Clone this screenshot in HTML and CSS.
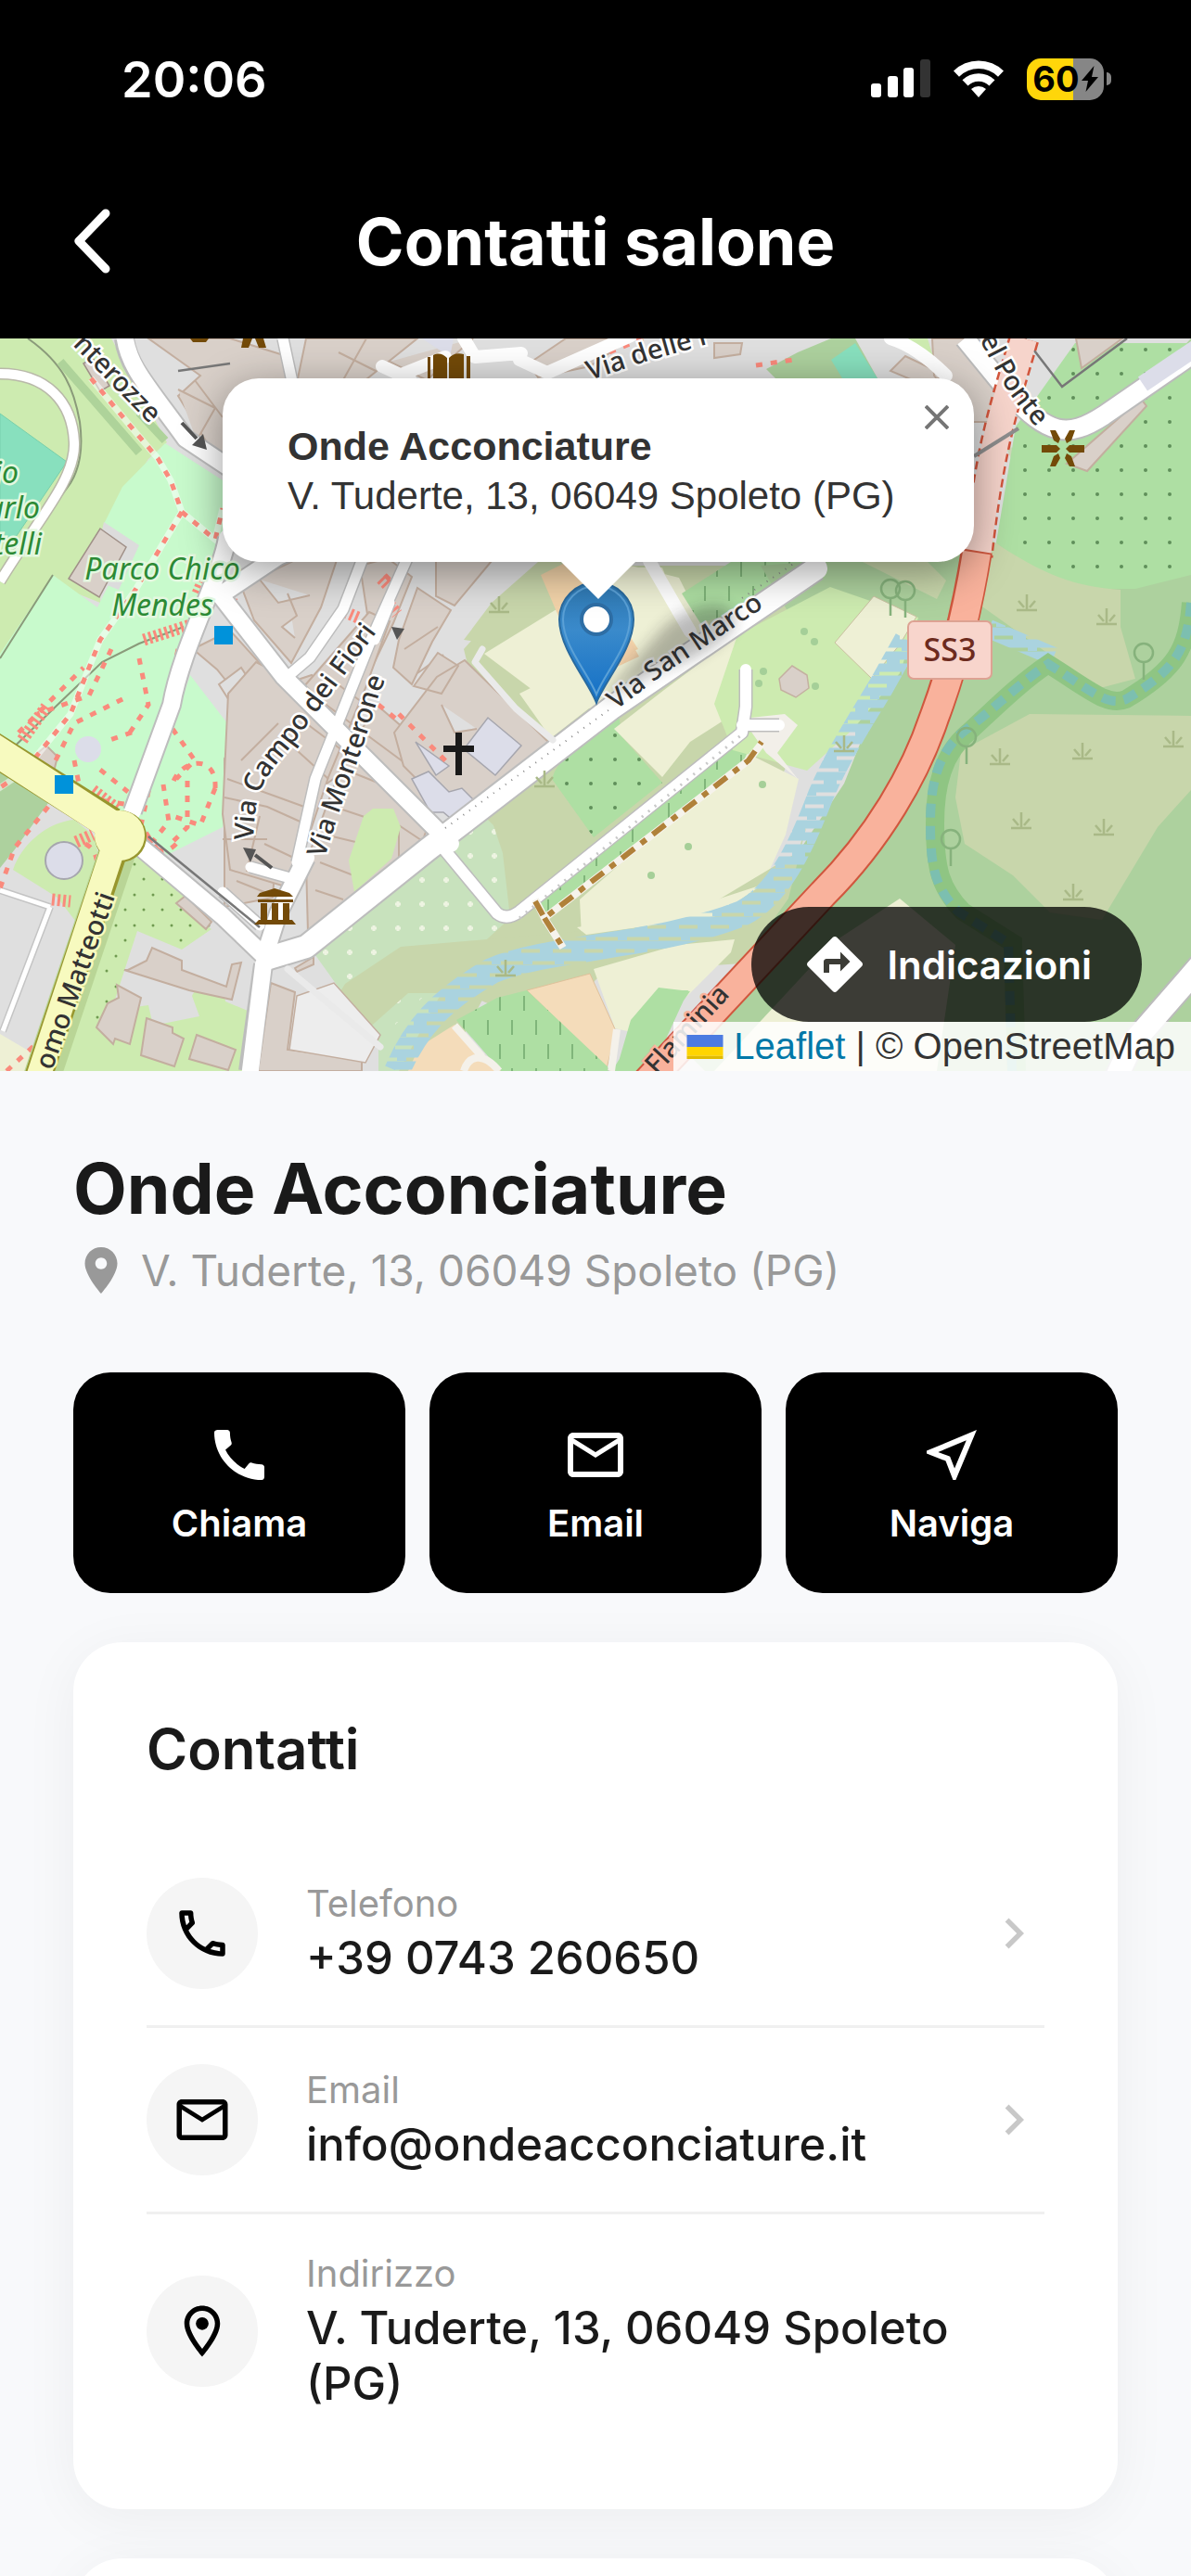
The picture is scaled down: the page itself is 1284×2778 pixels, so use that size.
FILE: index.html
```html
<!DOCTYPE html>
<html lang="it">
<head>
<meta charset="utf-8">
<meta name="viewport" content="width=device-width, initial-scale=1">
<title>Contatti salone</title>
<link rel="stylesheet" href="styles.css">
</head>
<body>
<header class="topbar">
  <div class="status">
    <span class="status-time">20:06</span>
    <div class="status-icons">
      <svg class="signal" viewBox="0 0 64 42" aria-hidden="true">
        <rect x="0" y="26" width="11" height="15" rx="3"/><rect x="18" y="18" width="11" height="23" rx="3"/><rect x="35" y="9" width="11" height="32" rx="3"/><rect x="53" y="0" width="11" height="41" rx="3" fill="#333"/>
      </svg>
      <svg class="wifi" viewBox="0 0 56 42" aria-hidden="true">
        <path d="M1 12.500a38.500 38.500 0 0 1 54 0l-6 6.200a30 30 0 0 0-42 0z"/>
        <path d="M10.500 22.300a25 25 0 0 1 35 0l-6 6.200a16.500 16.500 0 0 0-23 0z"/>
        <path d="M20 32a12 12 0 0 1 16 0l-8 9z"/>
      </svg>
      <div class="battery">
        <span class="battery-level">60</span>
        <svg class="bolt" viewBox="0 0 18 28" aria-hidden="true"><path d="M13.500 0L0 16h7L4.500 28 18 12h-7z"/></svg>
      </div>
      <i class="battery-nub"></i>
    </div>
  </div>
  <nav class="nav">
    <button class="back" type="button" aria-label="Indietro">
      <svg viewBox="0 0 40 70" aria-hidden="true"><path d="M35 5L6 35l29 30" fill="none" stroke="#fff" stroke-width="9" stroke-linecap="round" stroke-linejoin="round"/></svg>
    </button>
    <h1 class="nav-title">Contatti salone</h1>
  </nav>
</header>

<main>
  <section class="map" aria-label="Mappa">
    <svg class="map-canvas" viewBox="0 365 1284 790" preserveAspectRatio="xMidYMid slice" aria-hidden="true">
      <defs>
        <pattern id="trees" width="26" height="26" patternUnits="userSpaceOnUse"><circle cx="13" cy="13" r="2" fill="#5f8f5a"/></pattern>
        <pattern id="garden" width="20" height="33" patternUnits="userSpaceOnUse"><circle cx="5" cy="8" r="1.500" fill="#6f9a50"/><circle cx="15" cy="24" r="1.500" fill="#6f9a50"/></pattern>
        <pattern id="plants" width="52" height="52" patternUnits="userSpaceOnUse"><path d="M13 10v6M10 13h6M39 36v6M36 39h6M39 10v6M36 13h6M13 36v6M10 39h6" stroke="#eef4e2" stroke-width="3"/></pattern>
        <pattern id="rows" width="26" height="52" patternUnits="userSpaceOnUse"><path d="M6 8v16M19 34v16" stroke="#80b57a" stroke-width="2"/></pattern>
        <pattern id="water" width="34" height="26" patternUnits="userSpaceOnUse"><path d="M0 5h34M0 18h34" stroke="#aad3df" stroke-width="9"/><path d="M4 12h14M20 25h10" stroke="#aad3df" stroke-width="6"/></pattern>
        <linearGradient id="pin" x1="0" y1="0" x2="0" y2="1"><stop offset="0" stop-color="#2e77b0"/><stop offset=".4" stop-color="#3a8acb"/><stop offset="1" stop-color="#126fc6"/></linearGradient>
        <filter id="soft" x="-30%" y="-30%" width="160%" height="160%"><feGaussianBlur stdDeviation="8"/></filter>
        <g id="reed" fill="none" stroke="#a9b987" stroke-width="2.500"><path d="M-11 8h22M0 8v-17M-3 5l-6-7M3 5l6-7"/></g>
        <g id="tree" fill="none" stroke="#86b27c" stroke-width="2.500"><circle cy="-9" r="10"/><path d="M0 1v19"/></g>
      </defs>
      <rect x="0" y="365" width="1284" height="790" fill="#dfdfdf"/>

      <!-- grass and parks, west -->
      <path fill="#cdebb0" d="M0 365h120l60 112-20 18-48 75-4 80-50-20L0 740z"/>
      <path fill="#c8facc" d="M178 478l62 40v90l-40 70-36 200-20 30L0 795v-90l57-85 48 35 20-40-13-50 20-40z"/>
      <path fill="#c8facc" d="M205 728l57 74-22 90-60 30-30-34z"/>
      <path fill="#88e0be" stroke="#77cfab" stroke-width="1" d="M0 446l72 52-57 84-15-5z"/>
      <path fill="none" stroke="#8a9a7a" stroke-width="2" d="M30 365c40 28 50 56 56 90 4 30 0 50-10 66L0 626M57 620L0 710M0 820l60-58 50-48 40-20 48-18"/>
      <path fill="none" stroke="#b9b9a9" stroke-width="13" d="M0 403c50 0 78 30 80 74 2 40-40 84-80 150"/>
      <path fill="none" stroke="#fff" stroke-width="10" d="M0 403c50 0 78 30 80 74 2 40-40 84-80 150"/>
      <path stroke="#aed39a" stroke-width="9" d="M65 390l85 98M150 445l28 30"/>
      <path fill="#dcdcdc" d="M112 563l38 25-22 48-30-12z"/>
      <path fill="#d9d0c9" stroke="#a09088" stroke-width="1.500" d="M108 570l28 20-29 54-33-20zM90 392l10-6 18 30-10 6z"/>

      <!-- west parking and lawn south of the avenue -->
      <path fill="#add19e" d="M0 832l52 34-36 50-16 20z"/>
      <path fill="#cdebb0" d="M14 938c10-30 40-52 66-54l22 18 6 30-20 70-26-34z"/>
      <path fill="none" stroke="#c4c4c4" stroke-width="8" d="M0 960l54 18M54 978L3 1112"/>
      <path fill="none" stroke="#fff" stroke-width="5" d="M0 960l54 18M54 978L3 1112"/>
      <path fill="#eef0d5" d="M0 1115l34 20-4 20H0z"/>
      <path fill="#cdebb0" d="M138 920l16 4 46 38-8 16 36 24-32 22-48-20-28 86 40-6 5 22 50-10-8-22c6-16 36-10 36 6l24 10v65H50z"/>
      <path fill="url(#garden)" d="M138 925l12-4 80 78-32 20-50-20-28 90-20 20z"/>
      <path fill="#c8e2bd" d="M340 1030l100-85 65-50 38-28 58 64-25 42 30 12-10 38-56 14-50 30-50 88h-32v-30z"/>
      <path fill="url(#plants)" d="M340 1030l100-85 65-50 38-28 58 64-25 42 10 22-76 36-50 40-40 40z"/>

      <!-- farmland, meadows and orchards -->
      <path fill="#c8d6ab" d="M500 700l80-90h260l60 0 60 60-110 150-40 100-120 60-60 30-90 30-60 115h-50l60-110 60-55-8-70-10-30-60-60 50-40z"/>
      <path fill="#aedfa3" d="M598 832l30-50 38-24 4 36 44 50-74 59-45-63z"/>
      <path fill="url(#trees)" d="M598 832l30-50 38-24 4 36 44 50-74 59-45-63z"/>
      <path fill="#eef0d5" d="M512 690l12-20 80-52 68-10 60 15 30 60-120 86-42-34-20-20-60-50z"/>
      <path fill="#c8d6ab" d="M500 690l30-40 50-44h100l-40 60-100 30z"/>
      <path fill="#eef0d5" d="M522 705l78-48 80-45h34l28 70-110 76-50-8z"/>
      <path fill="#eef0d5" d="M560 748l40-20 40 32-46 36zM662 786l54-42 80-60 12 20-14 64-50 32-30 38z"/>
      <path fill="#f2d3a9" d="M583 620l40-20 65 100-60 25z"/>
      <path fill="#f0cfa8" d="M655 700l24-10 10 18-30 14z"/>
      <path fill="#eef0d5" d="M625 970l180-158 56 28-14 60-28 62-60 20-132 28z"/>
      <path fill="#aedfa3" d="M580 974l222-178 8 6-8 18-218 168z"/>
      <path fill="url(#rows)" d="M580 974l222-178 8 6-8 18-218 168z"/>
      <path fill="#aedfa3" d="M735 640l70-45h90l-70 55-70 22z"/>
      <path fill="url(#rows)" d="M735 640l70-45h90l-70 55-70 22z"/>
      <path fill="#add19e" d="M820 610l250-20 214-225v790H760l-20-20 60-90 50-110 60-90 20-50z"/>
      <path fill="#cdebb0" d="M795 685l100-52 95 33-20 60-50 60-50 45-80-22-20-50z"/>
      <path fill="#f2efe9" d="M800 775l46-5 14 12-22 30 22 28-34-28z"/>
      <path fill="#eef0d5" stroke="#c9c0a0" stroke-width="1" d="M900 693l42-50 46 22-18 30-30 37z"/>
      <path fill="#d9d0c9" stroke="#c4b0a0" stroke-width="1.500" d="M840 732l14-14 16 10 2 14-14 10-16-8z"/>
      <path fill="#c8d6ab" d="M930 606h70l20 20-10 20z"/>
      <path fill="#c8d6ab" d="M1075 460l38 55-30 30-18 80 62-45z" opacity=".7"/>
      <path fill="#aedfa3" d="M1095 460l64-90h125v250l-60 15h-90l-60-50z"/>
      <path fill="url(#trees)" d="M1095 480l64-110h125v250l-60 15h-90l-40-50z"/>
      <path fill="#c8d6ab" d="M1068 582c60 40 90 50 140 54v40l16 56-38 10-60-40-70-50z"/>
      <path fill="#c8d6ab" d="M1110 770l174 2v80l-36 40-60 100-56-8-40-40-52-34-10-50 6-50z"/>
      <path fill="#c8d6ab" d="M640 1003l120-24 100-60 10-30-20 80-50 70-150 10-60 60-90-38-60 0-90 80h-34l56-90 60-40z"/>
      <path fill="#eef0d5" d="M622 1000l120-20 80-26-50 34-140 20zM640 1045l90-26 62-6-4 14-90 90-35-8z"/>
      <path fill="#eef0d5" d="M770 1155l130-140 70-46 60 50-20 136z"/>
      <path fill="#f4dcba" stroke="#dfc19a" stroke-width="1" d="M568 1068l68-18 28 62-10 40z"/>
      <path fill="#f4dcba" d="M440 1155l12-26 38-24 50 50z"/>
      <path fill="#aedfa3" d="M492 1100l44-24 32-8 92 87H540z"/>
      <path fill="url(#rows)" d="M492 1100l44-24 32-8 92 87H540z"/>
      <path fill="#aedfa3" d="M712 1068h30l-40 87h-42zM680 1100l30-35 34 4-60 86h-20z"/>
      <path fill="none" stroke="#f4f1ea" stroke-width="8" d="M665 1110l-6 45M490 1106l30 34M500 1155c5-16 20-22 38 0"/>

      <!-- river and streams -->
      <path fill="none" stroke="url(#water)" stroke-width="28" d="M428 1155c20-46 46-76 102-108 60-26 180-26 270-62 40-20 64-74 80-115 16-44 46-90 70-130l28-50"/>
      <path fill="none" stroke="url(#water)" stroke-width="20" d="M1066 678l70 30"/>
      <path fill="none" stroke="#8fc583" stroke-width="20" d="M1284 650c-4 50-16 72-70 104-20 8-36-8-84-38-30 20-60 50-84 72-30 24-38 60-38 100 0 50 6 70 30 95l54 34 4 138"/>
      <path fill="none" stroke="#7cbfb0" stroke-width="10" stroke-dasharray="15 9" d="M1284 650c-4 50-16 72-70 104-20 8-36-8-84-38-30 20-60 50-90 72-30 24-37 60-37 100 0 50 6 70 30 95l54 34 4 138"/>

      <!-- town blocks -->
      <g fill="#d9d0c9" stroke="#c3ae9f" stroke-width="2">
        <path d="M160 365h88l64 20-4 26-62 80-6 14-48-78 24-22zM330 365h120l-60 48h-70zM365 380l40 20M395 365l-28 50M420 390l40 20 50-45"/>
        <path d="M570 392l40-27h70l-44 30-56 12zM770 370h30l-2 12-28 4zM1005 365h48l28 60-14 30-20 0-40-50zM960 400l16-16 42 20-20 12zM1160 365h50l-44 32z"/>
        <path d="M192 420l40 20-20 35M210 410l30 40"/>
        <path d="M260 632l66-32 0-5h40l-20 60-32 60-40-46zM280 625l20 25 34-8M310 640l10 24-16 12 14 12"/>
        <path d="M388 610l30-8 26 20-20 50-24 50-18-30 14-30zM470 605h60l-40 48-20-10zM430 690l20-56 36 24-20 34-22 46-20-18zM436 700l36-24M450 726l28-20"/>
        <path d="M208 700l40-20 80 88-30 34-64-80zM300 740l36-12 70 80-58 40-50 60-4 60-52 10 0-160z"/>
        <path fill="#dfdfdf" d="M236 738l24-18 34 52-20 26z"/>
        <path d="M328 740l70-80 22 10-26 72-40 96-40 120-66-20-8-60 6-130 30-34z"/>
        <path d="M242 860l46 10 40 18M245 840l50 18 44 16M240 905h48M280 880l-14 60M330 780l40 30M310 800l44 40M345 755l40 30M360 735l30 22M260 820l40-40M285 910l42 20M255 950l50 20"/>
        <path d="M330 930l40-110 36-60 30 26 40 60-20 60-50 50-34 40-40 10z"/>
        <path d="M372 830l60 24M360 870l60 20M350 900l50 12M345 930l36 14M392 790l46 34M340 960l30 10"/>
        <path d="M425 790l46-60 30-18 90 88-20 20-80 62-56-56zM446 740l26-36 22 14-18 30zM476 760l14 30 24-4"/>
        <path d="M430 890l30 20 10 8-26 20-14-14z"/>
        <path d="M190 974l10-8 28 28-6 8zM138 1046l20-10 6-14 32 14v10l48 18 6-24 10-2-10 40-46-10-70-22zM104 1108l12-26 12-6-2-14 26 14-12 50-16-6-2 6zM158 1098l28 10v6l12 6-10 30-36-12zM212 1116l42 16-8 22-42-12z"/>
        <path d="M292 1060l26 10-8 62 80 10 0 13H278zM318 1044l20-12 0 8-18 8z"/>
        <path d="M1150 500l80-70 6 8-64 70z"/>
        <path d="M36 816l14-12 12 12-4 16z"/>
      </g>
      <path fill="#cdebb0" d="M392 880l10-8 22 0 8 20-10 34-40 36-6-34z"/>
      <path fill="#ededed" stroke="#c3ae9f" stroke-width="1.500" d="M320 1074l40-14 50 56-16 30-82-14z"/>
      <path fill="#dcdde9" stroke="#a6a6ae" stroke-width="1.500" d="M500 808l26-34 36 30-28 32zM444 840l18-8 22 22 14-4 12 12-20 24-12-10-14 0zM448 800l36 26-14 10z"/>
      <path fill="#dcdde9" d="M455 365h34l-4 20z"/>
      <path fill="#add19e" d="M860 380l36-15h26l24 43h-110l-10-10z"/>
      <path fill="#88e0be" d="M896 388l26-18 24 38h-38z"/>
      <path fill="#cdebb0" d="M960 365h40l8 26z"/>
      <g fill="#dcdde9" stroke="#a6a6ae" stroke-width="2"><circle cx="69" cy="928" r="20"/><circle cx="95" cy="808" r="14" stroke="none"/></g>

      <!-- paths: stairs and footways -->
      <g fill="none" stroke="#fff" stroke-opacity=".5" stroke-width="7">
        <path d="M98 408l48 58 24 28 14 24 12 34-50 84-38 54-32 80-50 62-30 20M196 552l36 30 8-34"/>
      </g>
      <g fill="none" stroke="#fa8a7c" stroke-width="5" stroke-dasharray="7 9">
        <path d="M98 408l48 58 24 28 14 24 12 34-50 84-38 54-32 80-50 62-30 20M196 552l36 30 8-34"/>
        <path d="M184 760l-16 60-26 60M120 700l-24 50-56 20M150 710l10 50-20 30M142 790l-30 10M192 700l-20 90M20 790l70-70M60 820l20-40 60-30M80 820l8 40 52 8M108 830l30 24M174 790l-22 100 20 30M186 786l24 34-20 20M176 846l6 40-16 20M202 842v50l-20 20M232 850c2-40-40-30-46-4M232 850l-16 40-30-10"/>
        <path d="M92 910c20 10 14 40 4 90l-40 110-50 46M52 870l-36 44-16 44M190 910c-20 20-30-4-34-14"/>
        <path d="M242 600l-16 60M246 632l8 16M415 620l10 10M430 770l56 56M408 760l20 16"/>
        <path d="M657 380l36-15M815 394l40-6"/>
      </g>
      <g fill="none" stroke="#fa8a7c" stroke-width="13" stroke-dasharray="3 3"><path d="M155 690l50-16M213 640l6-14M372 660l14 6M82 908l18-8M56 970l20 2M24 798l26-36M411 624l8 8M420 652l8 10M100 852l26 20"/></g>

      <!-- roads -->
      <g fill="none" stroke="#bdbdbd" stroke-linejoin="round">
        <path stroke-width="22" d="M134 365c4 30 24 50 66 108l60 40M245 580c-6 40-50 120-60 180l-42 115M240 640l60-40 100-40"/>
        <path stroke-width="22" d="M236 640l70 90 60 60 120 120M150 912l90 76 50 48M284 1040l-16 115M330 925l-30 60-14 44"/>
        <path stroke-width="28" d="M290 1033l40-12 130-104 200-154 220-150"/>
        <path stroke-width="14" d="M390 605l-20 52-36 52-28 24M440 600l-40 90-60 150-20 90M240 962l40 36M305 365l15 70M420 650l-16 40M270 935l50 14"/>
        <path stroke-width="15" d="M478 915l58 70c8 6 16 4 24-2L800 790l4-28 0-40M800 782l40 0"/>
      </g>
      <g fill="none" stroke="#fff" stroke-linejoin="round" stroke-linecap="round">
        <path stroke-width="18" d="M134 360c4 35 24 55 66 113l60 40M245 580c-6 40-50 120-60 180l-42 115M240 640l60-40 100-40"/>
        <path stroke-width="18" d="M236 640l70 90 60 60 120 120M152 914l88 74 50 48M284 1040l-16 130M330 925l-30 60-14 44"/>
        <path stroke-width="24" d="M290 1033l40-12 130-104 200-154 220-150"/>
        <path stroke-width="11" d="M390 605l-20 52-36 52-28 24M440 600l-40 90-60 150-20 90M240 962l40 36M305 365l15 70M420 650l-16 40M270 935l50 14"/>
        <path stroke-width="12" d="M478 915l58 70c8 6 16 4 24-2L800 790l4-28 0-40M800 782l40 0"/>
        <path stroke-width="14" d="M500 365l12 20 50-4M560 388l30 14 90-40M480 385l-50 20M960 365c20 6 40 20 60 40M412 395l30 14M700 605l44 76"/>
        <path stroke-width="7" stroke="#eaeaea" d="M520 700l-8 14 44 50 40 34M310 1045l100 84"/>
      </g>
      <path stroke="#888" stroke-width="2" stroke-dasharray="1 7" d="M480 893l180-130M800 645l60-40" fill="none"/>
      <path d="M560 990L800 792" stroke="#c9c9c9" stroke-width="3" stroke-dasharray="2 7"/>
      <path fill="none" stroke="#777" stroke-width="2.500" d="M160 902l120 98M192 400l56-8M1105 365l40 52 70-52"/>
      <path fill="none" stroke="#f6f3ec" stroke-width="8" d="M577 970l10 20 220-170 14-18M587 990l20 32"/>
      <path fill="none" stroke="#b0813a" stroke-width="6" stroke-dasharray="17 9 7 9" d="M577 972l10 18 220-170 14-20M587 990l20 32"/>

      <!-- avenue -->
      <path fill="none" stroke="#b9d596" stroke-width="40" d="M126 920L44 1165"/>
      <path fill="none" stroke="#98962e" stroke-width="30" d="M122 920L40 1165"/>
      <path fill="none" stroke="#98962e" stroke-width="36" d="M-10 806l130 82"/>
      <circle cx="130" cy="902" r="28" fill="#98962e"/>
      <path fill="none" stroke="#f7fabf" stroke-width="26" d="M122 915L40 1165"/>
      <path fill="none" stroke="#f7fabf" stroke-width="33" d="M-10 806l136 88"/>
      <circle cx="129" cy="901" r="27" fill="#f7fabf"/>

      <!-- east road and state road -->
      <path fill="none" stroke="#bbb" stroke-width="24" d="M1300 372l-110 76c-40 26-60 20-100-22l-50-61"/>
      <path fill="none" stroke="#fff" stroke-width="20" d="M1300 372l-110 76c-40 26-60 20-100-22l-50-61"/>
      <path stroke="#dcdde9" stroke-width="18" d="M1300 368l-68 46"/>
      <path fill="none" stroke="#d2553c" stroke-width="33" stroke-dasharray="9 5" d="M1104 365c-20 70-36 110-50 235"/>
      <path fill="none" stroke="#f6d4cb" stroke-width="28" d="M1104 365c-20 70-36 110-50 235"/>
      <path fill="none" stroke="#8d8d8d" stroke-width="4" d="M1050 492l48-30"/>
      <path fill="none" stroke="#d0573e" stroke-width="34" d="M1053 594c-8 50-20 110-46 180-20 60-60 130-120 190L690 1175"/>
      <path fill="none" stroke="#f9b29c" stroke-width="30" d="M1053 596c-8 50-20 110-46 178-20 60-60 130-120 190L690 1175"/>
      <path fill="none" stroke="#bbb" stroke-width="28" d="M1200 1170l20-44 80-92"/>
      <path fill="none" stroke="#fff" stroke-width="24" d="M1200 1170l20-44 80-92"/>

      <g>
        <use href="#reed" x="1107" y="650"/><use href="#reed" x="1193" y="665"/><use href="#reed" x="1078" y="816"/><use href="#reed" x="1167" y="810"/><use href="#reed" x="1265" y="797"/><use href="#reed" x="1101" y="885"/><use href="#reed" x="1190" y="892"/><use href="#reed" x="1157" y="962"/><use href="#reed" x="910" y="802"/><use href="#reed" x="587" y="840"/><use href="#reed" x="545" y="1044"/><use href="#reed" x="538" y="652"/>
        <use href="#tree" x="1233" y="713"/><use href="#tree" x="1042" y="804"/><use href="#tree" x="1025" y="914"/><use href="#tree" x="960" y="644"/><use href="#tree" x="976" y="646"/>
        <g fill="#a5cf98"><circle cx="822" cy="846" r="4"/><circle cx="742" cy="913" r="4"/><circle cx="702" cy="944" r="4"/><circle cx="823" cy="724" r="4"/><circle cx="818" cy="737" r="4"/><circle cx="867" cy="681" r="4"/><circle cx="878" cy="692" r="4"/><circle cx="879" cy="740" r="4"/></g>
      </g>

      <!-- symbols -->
      <g fill="#0092da"><path d="M231 675h20v20h-20zM59 836h20v20H59z"/></g>
      <path d="M491 790h7v14h13v7h-13v25h-7v-25h-13v-7h13z"/>
      <g fill="#734a08">
        <path d="M277 967l3-4 16-5 16 5 4 4zM278 970h38v3h-38zM281 974h7v18h-7zM293 974h7v18h-7zM305 974h7v18h-7zM279 992h36l4 5h-45z"/>
        <path d="M461 385h3v25h-3zM467 383c6-3 11-1 15 3v24h-15zM484 386c4-4 9-6 16-4v28h-16zM503 384h4v26h-4zM205 365h20l-3 4h-14zM262 365h10l-4 10h-8zM275 365h9l3 10h-8z"/>
        <path d="M1123 480h16l4 4-4 4h-16zM1169 480h-16l-4 4 4 4h16zM1132 464h6l5 9-2 5-5-3zM1159 464h-6l-5 9 2 5 5-3zM1132 503h6l5-9-2-5-5 3zM1159 503h-6l-5-9 2-5 5 3z"/>
      </g>
      <path d="M196 456l16 17M275 922l18 14" stroke="#555" stroke-width="4"/>
      <path fill="#555" d="M223 485l-16-5 12-12zM262 914l14 2-6 14zM428 690l-6-14 14 2z"/>

      <!-- labels -->
      <defs>
        <path id="l1" d="M78 372l96 98"/><path id="l2" d="M273 906c2-50 6-60 40-100l96-128"/><path id="l3" d="M350 926c20-70 40-110 58-176l30-70"/>
        <path id="l4" d="M664 766l50-38 120-80"/><path id="l5" d="M56 1155l76-210"/><path id="l6" d="M708 1160l110-120"/><path id="l7" d="M1056 366c16 30 28 60 70 104"/><path id="l8" d="M636 410l60-20 120-34"/>
      </defs>
      <g class="street">
        <text><textPath href="#l1">nterozze</textPath></text>
        <text><textPath href="#l2">Via Campo dei Fiori</textPath></text>
        <text><textPath href="#l3">Via Monterone</textPath></text>
        <text><textPath href="#l4">Via San Marco</textPath></text>
        <text class="street-yellow"><textPath href="#l5">omo Matteotti</textPath></text>
        <text class="street-red"><textPath href="#l6">Flaminia</textPath></text>
        <text><textPath href="#l7">el Ponte</textPath></text>
        <text><textPath href="#l8">Via delle F</textPath></text>
      </g>
      <g class="park">
        <text x="175" y="625" text-anchor="middle">Parco Chico</text>
        <text x="175" y="664" text-anchor="middle">Mendes</text>
        <text x="20" y="521" text-anchor="end">io</text>
        <text x="43" y="559" text-anchor="end">arlo</text>
        <text x="45" y="598" text-anchor="end">telli</text>
      </g>
      <rect x="979" y="670" width="90" height="62" rx="6" fill="#f8d5cc" stroke="#dda293" stroke-width="2"/>
      <text class="shield" x="1024" y="713" text-anchor="middle">SS3</text>

      <!-- position pin -->
      <path d="M645 758l66-76c20-26 70-40 80-20s-40 50-80 60z" filter="url(#soft)" opacity=".3"/>
      <path d="M643 758c-8-22-40-58-40-90a40 40 0 0 1 80 0c0 32-32 68-40 90z" fill="url(#pin)" stroke="#2a6a9e" stroke-width="2"/>
      <path d="M643 749c-8-22-36-52-36-81a36 36 0 0 1 72 0c0 29-28 59-36 81z" fill="none" stroke="#5aa0d6" stroke-width="2"/>
      <circle cx="643" cy="668" r="16" fill="#fff" stroke="#2e6ea5" stroke-width="4"/>
    </svg>

    <div class="popup">
      <button class="popup-close" type="button" aria-label="Chiudi">
        <svg viewBox="0 0 26 26" aria-hidden="true"><path d="M1 1l24 24M25 1L1 25" stroke="#757575" stroke-width="4"/></svg>
      </button>
      <strong>Onde Acconciature</strong><br>V. Tuderte, 13, 06049 Spoleto (PG)
    </div>

    <div class="map-footer">
      <a class="directions" href="#indicazioni">
        <svg class="icon-lg" viewBox="0 0 24 24" aria-hidden="true"><path d="M21.710 11.290l-9-9c-.39-.39-1.020-.39-1.410 0l-9 9c-.39.39-.39 1.020 0 1.410l9 9c.39.39 1.020.39 1.410 0l9-9c.39-.38.39-1.010 0-1.410zM14 14.500V12h-4v3H8v-4c0-.55.45-1 1-1h5V7.500l3.500 3.500-3.500 3.500z"/></svg>
        <span>Indicazioni</span>
      </a>
      <div class="attribution">
        <a href="#leaflet"><svg class="flag" viewBox="0 0 12 8" aria-hidden="true"><path fill="#4C7BE1" d="M0 0h12v4H0z"/><path fill="#FFD500" d="M0 4h12v3H0z"/><path fill="#E0BC00" d="M0 7h12v1H0z"/></svg> Leaflet</a> | © OpenStreetMap
      </div>
    </div>
  </section>

  <div class="content">
    <section class="intro">
      <h2 class="salon">Onde Acconciature</h2>
      <p class="address">
        <svg class="icon-sm" viewBox="0 0 24 24" aria-hidden="true"><path d="M12 2C8.130 2 5 5.130 5 9c0 5.250 7 13 7 13s7-7.750 7-13c0-3.870-3.130-7-7-7zm0 9.500c-1.380 0-2.500-1.120-2.500-2.500s1.120-2.500 2.500-2.500 2.500 1.120 2.500 2.500-1.120 2.500-2.500 2.500z"/></svg>
        <span>V. Tuderte, 13, 06049 Spoleto (PG)</span>
      </p>
    </section>

    <div class="actions">
      <button class="action" type="button">
        <svg class="icon-lg" viewBox="0 0 24 24" aria-hidden="true"><path d="M20.010 15.380c-1.230 0-2.420-.2-3.530-.56-.35-.12-.74-.03-1.010.24l-1.570 1.970c-2.830-1.350-5.480-3.900-6.890-6.830l1.950-1.660c.27-.28.35-.67.24-1.020-.37-1.110-.56-2.300-.56-3.530 0-.54-.45-.99-.99-.99H4.190C3.650 3 3 3.240 3 3.990 3 13.280 10.730 21 20.010 21c.71 0 .99-.63.99-1.180v-3.450c0-.54-.45-.99-.99-.99z"/></svg>
        Chiama
      </button>
      <button class="action" type="button">
        <svg class="icon-lg" viewBox="0 0 24 24" aria-hidden="true"><path d="M22 6c0-1.100-.9-2-2-2H4c-1.100 0-2 .9-2 2v12c0 1.100.9 2 2 2h16c1.100 0 2-.9 2-2V6zm-2 0l-8 5-8-5h16zm0 12H4V8l8 5 8-5v10z"/></svg>
        Email
      </button>
      <button class="action" type="button">
        <svg class="icon-lg" viewBox="0 0 24 24" aria-hidden="true"><path d="M17.270 6.730l-4.240 10.130-1.320-3.420-.32-.83-.82-.32-3.430-1.330 10.130-4.230M21 3L3 10.530v.98l6.840 2.650L12.480 21h.98L21 3z"/></svg>
        Naviga
      </button>
    </div>

    <section class="card">
      <h3 class="card-title">Contatti</h3>
      <a class="row" href="tel:+390743260650">
        <span class="badge"><svg class="icon-md" viewBox="0 0 24 24" aria-hidden="true"><path d="M6.540 5c.06.89.21 1.760.45 2.590l-1.200 1.200c-.41-1.200-.67-2.470-.76-3.790h1.510m9.860 12.020c.85.24 1.720.39 2.600.45v1.490c-1.320-.09-2.590-.35-3.800-.75l1.200-1.190M7.500 3H4c-.55 0-1 .45-1 1 0 9.390 7.610 17 17 17 .55 0 1-.45 1-1v-3.490c0-.55-.45-1-1-1-1.240 0-2.450-.2-3.570-.57-.1-.04-.21-.05-.31-.05-.26 0-.51.1-.71.29l-2.200 2.200c-2.830-1.450-5.150-3.760-6.590-6.590l2.200-2.200c.28-.28.36-.67.25-1.020C8.700 6.450 8.500 5.250 8.500 4c0-.55-.45-1-1-1z"/></svg></span>
        <span class="row-text"><span class="label">Telefono</span><span class="value">+39 0743 260650</span></span>
        <svg class="icon-md chevron" viewBox="0 0 24 24" aria-hidden="true"><path d="M10 6L8.590 7.410 13.170 12l-4.580 4.590L10 18l6-6z"/></svg>
      </a>
      <a class="row" href="mailto:info@ondeacconciature.it">
        <span class="badge"><svg class="icon-md" viewBox="0 0 24 24" aria-hidden="true"><path d="M22 6c0-1.100-.9-2-2-2H4c-1.100 0-2 .9-2 2v12c0 1.100.9 2 2 2h16c1.100 0 2-.9 2-2V6zm-2 0l-8 5-8-5h16zm0 12H4V8l8 5 8-5v10z"/></svg></span>
        <span class="row-text"><span class="label">Email</span><span class="value">info@ondeacconciature.it</span></span>
        <svg class="icon-md chevron" viewBox="0 0 24 24" aria-hidden="true"><path d="M10 6L8.590 7.410 13.170 12l-4.580 4.590L10 18l6-6z"/></svg>
      </a>
      <div class="row">
        <span class="badge"><svg class="icon-md" viewBox="0 0 24 24" aria-hidden="true"><path d="M12 2C8.130 2 5 5.130 5 9c0 5.250 7 13 7 13s7-7.750 7-13c0-3.870-3.130-7-7-7zM7 9c0-2.760 2.240-5 5-5s5 2.240 5 5c0 2.880-2.880 7.190-5 9.880C9.920 16.210 7 11.850 7 9z"/><circle cx="12" cy="9" r="2.500"/></svg></span>
        <span class="row-text"><span class="label">Indirizzo</span><span class="value">V. Tuderte, 13, 06049 Spoleto (PG)</span></span>
      </div>
    </section>

    <section class="card card-next"></section>
  </div>
</main>
</body>
</html>
```
FILE: styles.css
```css
* { box-sizing: border-box; }
body {
  height: 100vh;
  margin: 0;
  display: flex;
  flex-direction: column;
  overflow: hidden;
  background: #f8f9fb;
  color: #1a1a1a;
  font-family: Inter, "Liberation Sans", sans-serif;
}
h1, h2, h3, p { margin: 0; }
a { color: inherit; text-decoration: none; }
button { border: 0; padding: 0; font-family: inherit; cursor: pointer; }
svg { display: block; fill: currentColor; }

/* the part under the top bar scrolls */
main { flex: 1; min-height: 0; overflow-y: auto; scrollbar-width: none; }

.icon-lg { width: 72px; height: 72px; }
.icon-md { width: 66px; height: 66px; flex: none; }
.icon-sm { width: 60px; height: 60px; flex: none; }

/* top bar */
.topbar { flex: none; background: #000; color: #fff; padding-bottom: 15px; }
.status {
  display: flex;
  justify-content: space-between;
  align-items: center;
  height: 170px;
  padding: 0 86px 0 131px;
}
.status-time { font-size: 54px; font-weight: 600; }
.status-icons { display: flex; align-items: center; }
.signal { width: 64px; height: 42px; }
.wifi { width: 56px; height: 42px; margin: 0 24px; }
.battery {
  display: flex;
  align-items: center;
  justify-content: center;
  gap: 2px;
  width: 83px;
  height: 45px;
  border-radius: 15px;
  background: linear-gradient(90deg, #ffd60a 60%, #868686 60%);
  color: #000;
}
.battery-level { font-size: 38px; font-weight: 700; line-height: 45px; }
.bolt { width: 18px; height: 28px; }
.battery-nub { width: 5px; height: 14px; margin-left: 3px; border-radius: 0 6px 6px 0; background: #868686; }

.nav {
  display: grid;
  grid-template-columns: 40px 1fr 40px;
  align-items: center;
  height: 180px;
  padding: 0 79px;
}
.back { background: none; color: #fff; }
.back svg { width: 40px; height: 70px; }
.nav-title { font-size: 70px; font-weight: 700; text-align: center; }

/* map */
.map { position: relative; height: 790px; overflow: hidden; font-family: "Liberation Sans", sans-serif; }
.map-canvas { width: 100%; height: 100%; }
.street { font: 500 29px "Noto Sans", sans-serif; fill: #333; }
.street text, .park text { paint-order: stroke; stroke: #fff; stroke-width: 5px; }
.street .street-yellow { stroke: #f7fabf; }
.street .street-red { stroke: #f9b29c; }
.park { font: italic 400 32px "Noto Sans", sans-serif; fill: #2c8a35; }
.park text { stroke: #e4f8e0; }
.shield { font: 500 34px "Noto Sans", sans-serif; fill: #6d2b1e; }

.popup {
  position: absolute;
  top: 43px;
  left: 50%;
  width: 810px;
  transform: translateX(calc(-50% + 3px));
  padding: 47px 70px 45px;
  border-radius: 39px;
  background: #fff;
  box-shadow: 0 10px 46px rgba(0, 0, 0, .4);
  color: #333;
  font-size: 42px;
  line-height: 53px;
  white-space: nowrap;
}
.popup strong { font-size: 43px; }
.popup::after {
  content: "";
  position: absolute;
  top: 100%;
  left: 50%;
  margin: -1px 0 0 -41px;
  border: 41px solid transparent;
  border-top-color: #fff;
  border-bottom: 0;
}
.popup-close { position: absolute; top: 29px; right: 27px; background: none; }
.popup-close svg { width: 26px; height: 26px; }

.map-footer {
  position: absolute;
  right: 0;
  bottom: 0;
  display: flex;
  flex-direction: column;
  align-items: flex-end;
}
.directions {
  display: flex;
  align-items: center;
  gap: 20px;
  height: 124px;
  margin-right: 53px;
  padding: 0 54px;
  border-radius: 62px;
  background: rgba(0, 0, 0, .75);
  color: #fff;
  font: 600 42px Inter, sans-serif;
}
.attribution {
  padding: 0 17px 0 14px;
  background: rgba(255, 255, 255, .85);
  color: #333;
  font-size: 40px;
  line-height: 53px;
}
.attribution a { color: #0078a8; }
.flag { display: inline; width: 40px; height: 26px; }

/* content */
.content { display: flex; flex-direction: column; gap: 53px; padding: 81px 79px 0; }
.intro { display: flex; flex-direction: column; gap: 12px; margin-bottom: 27px; }
.salon { font-size: 75px; line-height: 92px; font-weight: 700; }
.address {
  display: flex;
  align-items: center;
  gap: 13px;
  color: #999;
  font-size: 46px;
  line-height: 56px;
}
.actions { display: grid; grid-template-columns: repeat(3, 1fr); gap: 26px; }
.action {
  display: flex;
  flex-direction: column;
  align-items: center;
  gap: 13px;
  padding: 53px 0 50px;
  border-radius: 40px;
  background: #000;
  color: #fff;
  font-size: 40px;
  font-weight: 600;
  line-height: 50px;
}
.card {
  padding: 79px 79px 66px;
  border-radius: 53px;
  background: #fff;
  box-shadow: 0 10px 60px rgba(0, 0, 0, .05);
}
.card-title { margin-bottom: 64px; font-size: 60px; font-weight: 600; line-height: 72px; }
.row { display: flex; align-items: center; gap: 52px; padding: 39px 0; }
.row + .row { border-top: 3px solid #f0f0f0; }
.badge {
  display: grid;
  place-items: center;
  flex: none;
  width: 120px;
  height: 120px;
  border-radius: 50%;
  background: #f5f5f5;
  color: #000;
}
.row-text { flex: 1; display: flex; flex-direction: column; gap: 4px; }
.label { color: #999; font-size: 40px; line-height: 50px; }
.value { font-size: 49px; font-weight: 500; line-height: 60px; }
.chevron { color: #c8c8c8; }
```
